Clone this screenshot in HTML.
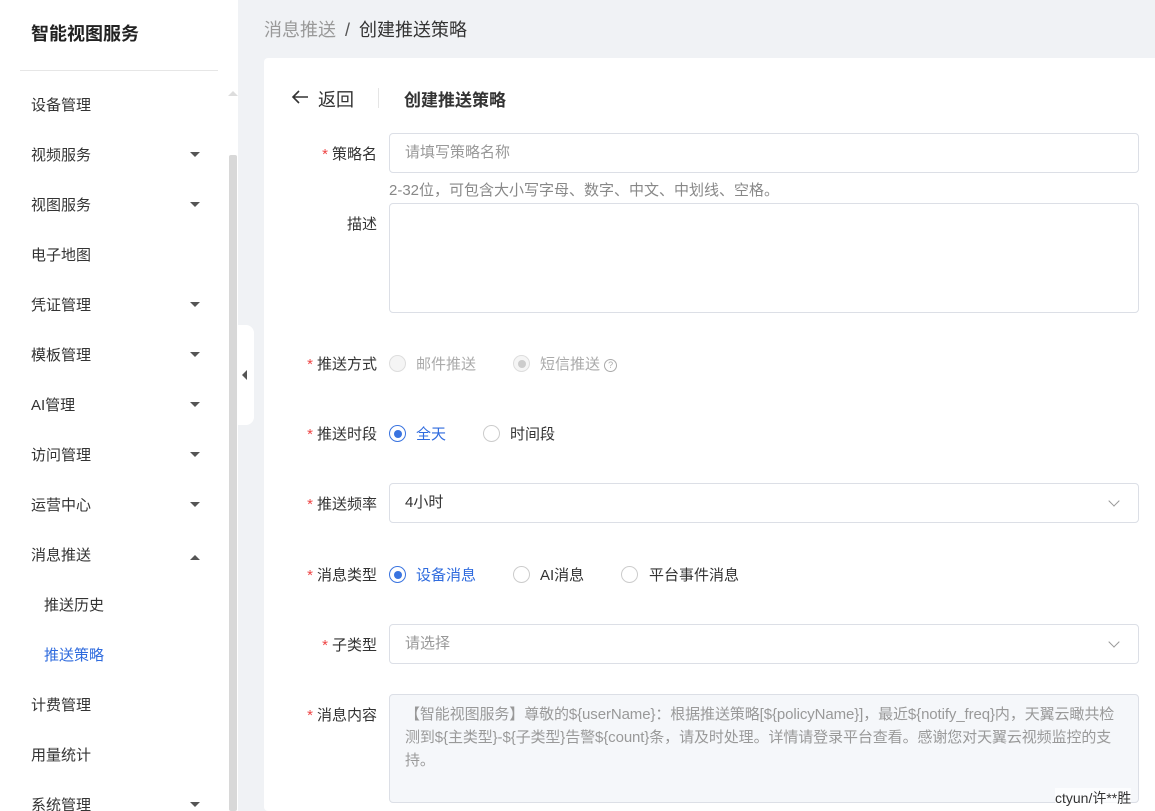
<!DOCTYPE html>
<html><head><meta charset="utf-8"><style>
*{box-sizing:border-box;margin:0;padding:0}
html,body{width:1155px;height:811px;overflow:hidden}
body{background:#f0f2f5;font-family:"Liberation Sans","Noto Sans CJK SC",sans-serif;font-size:15px;color:#333;position:relative}
.side{position:absolute;left:0;top:0;width:238px;height:811px;background:#fff}
.logo{position:absolute;left:31px;top:20px;font-size:18px;font-weight:bold;color:#222}
.hr{position:absolute;left:20px;top:70px;width:198px;height:1px;background:#e6e6e6}
.mi{position:absolute;left:31px;font-size:15px;color:#333}
.sub{left:44px}
.act{color:#2f6bde}
.arr{position:absolute;left:190px;width:0;height:0;border-left:5px solid transparent;border-right:5px solid transparent;border-top:5px solid #555}
.arr.up{border-top:none;border-bottom:5px solid #555}
.track{position:absolute;left:229px;top:155px;width:8px;height:656px;background:#d8d8d8;border-radius:2px}
.tab{position:absolute;left:238px;top:325px;width:16px;height:100px;background:#fff;border-radius:0 8px 8px 0}
.tab:after{content:"";position:absolute;left:4px;top:45px;border-top:5px solid transparent;border-bottom:5px solid transparent;border-right:5px solid #555}
.crumb{position:absolute;left:264px;top:16px;font-size:18px;color:#999}
.crumb b{font-weight:normal;color:#333}
.card{position:absolute;left:264px;top:58px;width:900px;height:753px;background:#fff;border-radius:4px}
.a{position:absolute}
.lbl{position:absolute;right:778px;font-size:15px;color:#333;text-align:right;white-space:nowrap}
.lbl i{color:#e44;font-style:normal;margin-right:4px}
.inp{position:absolute;left:389px;width:750px;border:1px solid #dcdfe6;border-radius:4px;background:#fff;font-size:15px;color:#999;padding-left:15px}
.rad{position:absolute;width:17px;height:17px;border:1px solid #ccc;border-radius:50%;background:#fff}
.rad.on{border-color:#3a74e0}
.rad.on:after{content:"";position:absolute;left:3.5px;top:3.5px;width:8px;height:8px;border-radius:50%;background:#3a74e0}
.rad.dis{background:#f5f5f5;border-color:#ddd}
.rad.dis.ck:after{content:"";position:absolute;left:3.5px;top:3.5px;width:8px;height:8px;border-radius:50%;background:#ccc}
.rt{position:absolute;font-size:15px}
.chev{position:absolute;left:1110px;width:8px;height:8px;border-right:1.3px solid #999;border-bottom:1.3px solid #999;transform:rotate(45deg)}
</style></head><body>
<div class="side">
<div class="logo">智能视图服务</div><div class="hr"></div>
<div class="mi" style="top:94px">设备管理</div>
<div class="mi" style="top:144px">视频服务</div><div class="arr" style="top:152px"></div>
<div class="mi" style="top:194px">视图服务</div><div class="arr" style="top:202px"></div>
<div class="mi" style="top:244px">电子地图</div>
<div class="mi" style="top:294px">凭证管理</div><div class="arr" style="top:302px"></div>
<div class="mi" style="top:344px">模板管理</div><div class="arr" style="top:352px"></div>
<div class="mi" style="top:394px">AI管理</div><div class="arr" style="top:402px"></div>
<div class="mi" style="top:444px">访问管理</div><div class="arr" style="top:452px"></div>
<div class="mi" style="top:494px">运营中心</div><div class="arr" style="top:502px"></div>
<div class="mi" style="top:544px">消息推送</div><div class="arr up" style="top:555px"></div>
<div class="mi sub" style="top:594px">推送历史</div>
<div class="mi sub act" style="top:644px">推送策略</div>
<div class="mi" style="top:694px">计费管理</div>
<div class="mi" style="top:744px">用量统计</div>
<div class="mi" style="top:794px">系统管理</div><div class="arr" style="top:802px"></div>
<div style="position:absolute;left:228px;top:91px;border-left:5px solid transparent;border-right:5px solid transparent;border-bottom:5px solid #ddd"></div>
<div class="track"></div>
</div>
<div class="tab"></div>
<div class="crumb">消息推送 <span style="color:#555;margin:0 4px">/</span> <b>创建推送策略</b></div>
<div class="card"></div>
<svg class="a" style="left:291px;top:89px" width="18" height="16" viewBox="0 0 18 16"><path d="M17 8H2M8 2L2 8l6 6" fill="none" stroke="#333" stroke-width="1.6"/></svg>
<div class="a" style="left:318px;top:86px;font-size:18px;color:#333">返回</div>
<div class="a" style="left:378px;top:88px;width:1px;height:20px;background:#e5e5e5"></div>
<div class="a" style="left:404px;top:86px;font-size:17px;font-weight:bold;color:#333">创建推送策略</div>

<div class="lbl" style="top:143px"><i>*</i>策略名</div>
<div class="inp" style="top:133px;height:40px;line-height:38px">请填写策略名称</div>
<div class="a" style="left:389px;top:179px;font-size:15px;color:#888">2-32位，可包含大小写字母、数字、中文、中划线、空格。</div>
<div class="lbl" style="top:213px">描述</div>
<div class="inp" style="top:203px;height:110px"></div>

<div class="lbl" style="top:353px"><i>*</i>推送方式</div>
<div class="rad dis" style="left:389px;top:355px"></div><div class="rt" style="left:416px;top:353px;color:#aaa">邮件推送</div>
<div class="rad dis ck" style="left:513px;top:355px"></div><div class="rt" style="left:540px;top:353px;color:#aaa">短信推送 <span style="display:inline-block;width:13px;height:13px;border:1px solid #aaa;border-radius:50%;font-size:9px;line-height:11px;text-align:center;vertical-align:1px">?</span></div>

<div class="lbl" style="top:423px"><i>*</i>推送时段</div>
<div class="rad on" style="left:389px;top:425px"></div><div class="rt act" style="left:416px;top:423px">全天</div>
<div class="rad" style="left:483px;top:425px"></div><div class="rt" style="left:510px;top:423px">时间段</div>

<div class="lbl" style="top:493px"><i>*</i>推送频率</div>
<div class="inp" style="top:483px;height:40px;line-height:38px;color:#333">4小时</div><div class="chev" style="top:497px"></div>

<div class="lbl" style="top:564px"><i>*</i>消息类型</div>
<div class="rad on" style="left:389px;top:566px"></div><div class="rt act" style="left:416px;top:564px">设备消息</div>
<div class="rad" style="left:513px;top:566px"></div><div class="rt" style="left:540px;top:564px">AI消息</div>
<div class="rad" style="left:621px;top:566px"></div><div class="rt" style="left:649px;top:564px">平台事件消息</div>

<div class="lbl" style="top:634px"><i>*</i>子类型</div>
<div class="inp" style="top:624px;height:40px;line-height:38px">请选择</div><div class="chev" style="top:638px"></div>

<div class="lbl" style="top:704px"><i>*</i>消息内容</div>
<div class="inp" style="top:694px;height:109px;background:#f5f7fa;padding:8px 14px 0 15px;line-height:23px;color:#999;letter-spacing:-0.1px">【智能视图服务】尊敬的${userName}：根据推送策略[${policyName}]，最近${notify_freq}内，天翼云瞰共检测到${主类型}-${子类型}告警${count}条，请及时处理。详情请登录平台查看。感谢您对天翼云视频监控的支持。</div>
<div class="a" style="left:1055px;top:788px;font-size:14px;color:#333;background:rgba(255,255,255,.7)">ctyun/许**胜</div>
</body></html>
